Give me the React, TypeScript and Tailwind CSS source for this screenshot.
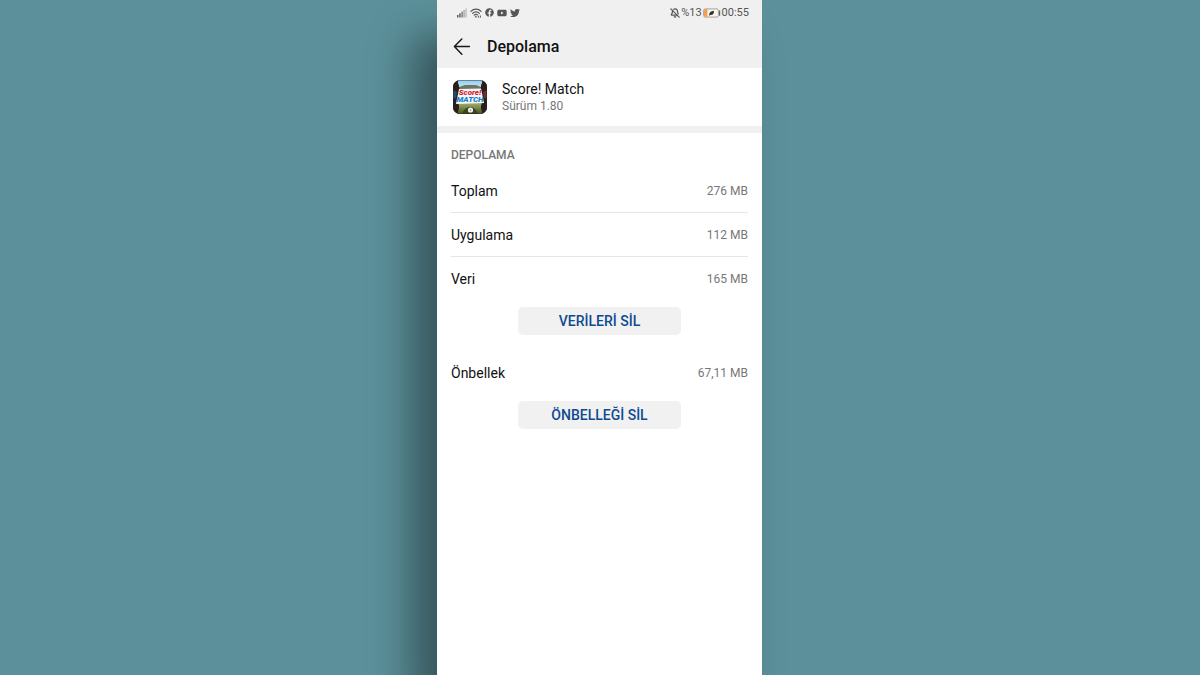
import React from 'react';
import { BellOff } from 'lucide-react';
import { FaFacebook, FaTwitter, FaYoutube } from 'react-icons/fa';

interface StorageRowProps {
  label: string;
  value: string;
  divider?: boolean;
}

const SignalIcon = () => (
  <svg viewBox="0 0 10 10" className="w-[10px] h-[10px]" aria-hidden="true">
    <rect x="0" y="7" width="1.4" height="2.5" fill="#555" />
    <rect x="2.2" y="5.4" width="1.4" height="4.1" fill="#555" />
    <rect x="4.4" y="3.6" width="1.4" height="5.9" fill="#777" />
    <rect x="6.4" y="2" width="1.4" height="7.5" fill="#aaa" />
    <rect x="8.4" y="0.5" width="1.4" height="9" fill="#bbb" />
  </svg>
);

const WifiIcon = () => (
  <svg viewBox="0 0 12 10" className="w-3 h-[10px]" fill="none" stroke="#555" strokeLinecap="round" aria-hidden="true">
    <path d="M0.9 3.3C3.8 0.3 8.2 0.3 11.1 3.3" strokeWidth="1.2" />
    <path d="M2.6 5.3C4.6 3.3 7.4 3.3 9.4 5.3" strokeWidth="1.2" />
    <path d="M4.2 7.2C5.3 6.1 6.5 6.1 7.3 6.8" strokeWidth="1.2" />
    <circle cx="5.8" cy="8.8" r="0.5" fill="#555" strokeWidth="0.5" />
    <path d="M8.4 7.9V9.4M10.4 9.4V7.9" strokeWidth="0.9" />
  </svg>
);

const BatteryIcon = () => (
  <svg viewBox="0 0 18 10" className="w-[18px] h-[10px]" aria-hidden="true">
    <rect x="0.6" y="0.9" width="14.8" height="8.2" rx="1.6" fill="#f8f4ec" stroke="#a09a90" strokeWidth="0.9" />
    <path d="M2.2 1.2H4.4V8.8H2.2A1.2 1.2 0 0 1 1 7.6V2.4A1.2 1.2 0 0 1 2.2 1.2Z" fill="#f0a050" />
    <path d="M6.2 7.6C6 4.6 7.6 3 11 2.8C11.2 5.8 9.6 7.4 7.2 7L6.6 7.8Z" fill="#333" />
    <rect x="16" y="2.2" width="1.2" height="5.6" rx="0.6" fill="#666" />
  </svg>
);

const BackIcon = () => (
  <svg
    viewBox="0 0 18 18"
    className="w-[18px] h-[18px]"
    fill="none"
    stroke="#1a1a1a"
    strokeWidth="1.5"
    strokeLinecap="round"
    strokeLinejoin="round"
    aria-hidden="true"
  >
    <path d="M1.4 8.6H16.4M8.8 1L1.4 8.6L8.8 16.2" />
  </svg>
);

const AppIcon = () => (
  <svg viewBox="0 0 34 34" className="w-[34px] h-[34px] shrink-0" role="img" aria-label="Score! Match">
    <defs>
      <clipPath id="icon-shape">
        <rect width="34" height="34" rx="7" />
      </clipPath>
      <linearGradient id="icon-sky" x1="0" y1="0" x2="0" y2="1">
        <stop offset="0" stopColor="#8ecdf0" />
        <stop offset="1" stopColor="#dceef6" />
      </linearGradient>
      <linearGradient id="icon-grass" x1="0" y1="0" x2="0" y2="1">
        <stop offset="0" stopColor="#b5c078" />
        <stop offset="1" stopColor="#42541f" />
      </linearGradient>
    </defs>
    <g clipPath="url(#icon-shape)">
      <rect width="34" height="34" fill="#30251f" />
      <rect x="5" width="24" height="10" fill="url(#icon-sky)" />
      <path d="M6 7L12 5H23L28 7V12H6Z" fill="#6d7661" />
      <rect x="3" y="21" width="28" height="13" fill="url(#icon-grass)" />
      {/* players */}
      <path d="M0 3C3 1 6 3 6 6C6 8 7 9 8 12L5 17V23C7 26 6 30 4 34H0Z" fill="#2b1d1b" />
      <path d="M34 3C31 1 28 3 28 6C28 8 27 9 26 12L29 17V23C27 26 28 30 30 34H34Z" fill="#2b1d1b" />
      <path d="M0 10L4 12L3 18L0 19Z" fill="#234d69" />
      <path d="M34 10L30 12L31 18L34 19Z" fill="#702d2b" />
      {/* title plate */}
      <path d="M6 9L28 8.5L31 23L3 24Z" fill="#f4f7fa" />
      <text x="17" y="15.4" textAnchor="middle" fontFamily="Roboto, sans-serif" fontSize="8" fontWeight="900" fontStyle="italic" fill="#d81f32">
        Score!
      </text>
      <text x="17" y="22.4" textAnchor="middle" fontFamily="Roboto, sans-serif" fontSize="8" fontWeight="900" fontStyle="italic" fill="#1b80c8">
        MATCH
      </text>
      <path d="M9 34C11 29 14 27 17 27C20 27 23 29 25 34Z" fill="#39471f" />
      <circle cx="17.5" cy="30" r="2.6" fill="#f2f2ea" />
      <path d="M17.5 29L18.5 29.8L18.1 31H16.9L16.5 29.8Z" fill="#aaa" />
      <rect x="0.4" y="0.4" width="33.2" height="33.2" rx="7" fill="none" stroke="#2a2422" strokeOpacity="0.6" strokeWidth="0.8" />
    </g>
  </svg>
);

const StorageRow: React.FC<StorageRowProps> = ({ label, value, divider }) => (
  <div className={`flex h-11 items-center justify-between border-b ${divider ? 'border-[#e6e6e6]' : 'border-transparent'}`}>
    <span className="text-sm text-[#111]">{label}</span>
    <span className="text-xs text-[#777]">{value}</span>
  </div>
);

const ClearButton: React.FC<{ children: React.ReactNode }> = ({ children }) => (
  <button
    type="button"
    className="mx-auto mt-[6px] flex h-7 w-[163px] items-center justify-center rounded-[5px] bg-[#f1f1f1] text-sm font-medium text-[#0f4a91]"
  >
    {children}
  </button>
);

export default function App() {
  return (
    <div className="min-h-screen bg-[#5c919b] pr-px font-['Roboto',sans-serif]">
      <main className="mx-auto min-h-screen max-w-[325px] bg-white shadow-[-25px_36px_40px_rgba(0,0,0,0.42)]">
        {/* Status bar */}
        <div className="flex h-[25px] items-center justify-between bg-[#f0f0f0] pl-5 pr-[13px] text-[11px] leading-[18px] text-[#555]">
          <div className="flex items-center gap-[3px]">
            <SignalIcon />
            <WifiIcon />
            <FaFacebook className="h-[9px] w-[9px]" />
            <FaYoutube className="h-[10px] w-[10px]" />
            <FaTwitter className="h-[10px] w-[10px]" />
          </div>
          <div className="flex items-center gap-px">
            <BellOff className="h-[10px] w-[10px]" strokeWidth={3} />
            <span>%13</span>
            <BatteryIcon />
            <span>00:55</span>
          </div>
        </div>

        <header className="flex h-[43px] items-center gap-4 bg-[#f0f0f0] px-4">
          <button type="button" aria-label="Geri">
            <BackIcon />
          </button>
          <h1 className="text-base font-medium text-[#111]">Depolama</h1>
        </header>

        {/* App info */}
        <section className="flex h-[65px] items-center gap-[15px] border-b-[7px] border-[#f0f0f0] px-4">
          <AppIcon />
          <div>
            <h2 className="text-sm leading-[18px] text-[#111]">Score! Match</h2>
            <p className="text-xs leading-4 text-[#777]">Sürüm 1.80</p>
          </div>
        </section>

        {/* Storage usage */}
        <section className="px-[14px]">
          <h3 className="flex h-9 items-center pt-2 text-xs font-medium text-[#777]">DEPOLAMA</h3>
          <StorageRow label="Toplam" value="276 MB" divider />
          <StorageRow label="Uygulama" value="112 MB" divider />
          <StorageRow label="Veri" value="165 MB" />
          <ClearButton>VERİLERİ SİL</ClearButton>
          <div className="mt-4">
            <StorageRow label="Önbellek" value="67,11 MB" />
          </div>
          <ClearButton>ÖNBELLEĞİ SİL</ClearButton>
        </section>
      </main>
    </div>
  );
}
